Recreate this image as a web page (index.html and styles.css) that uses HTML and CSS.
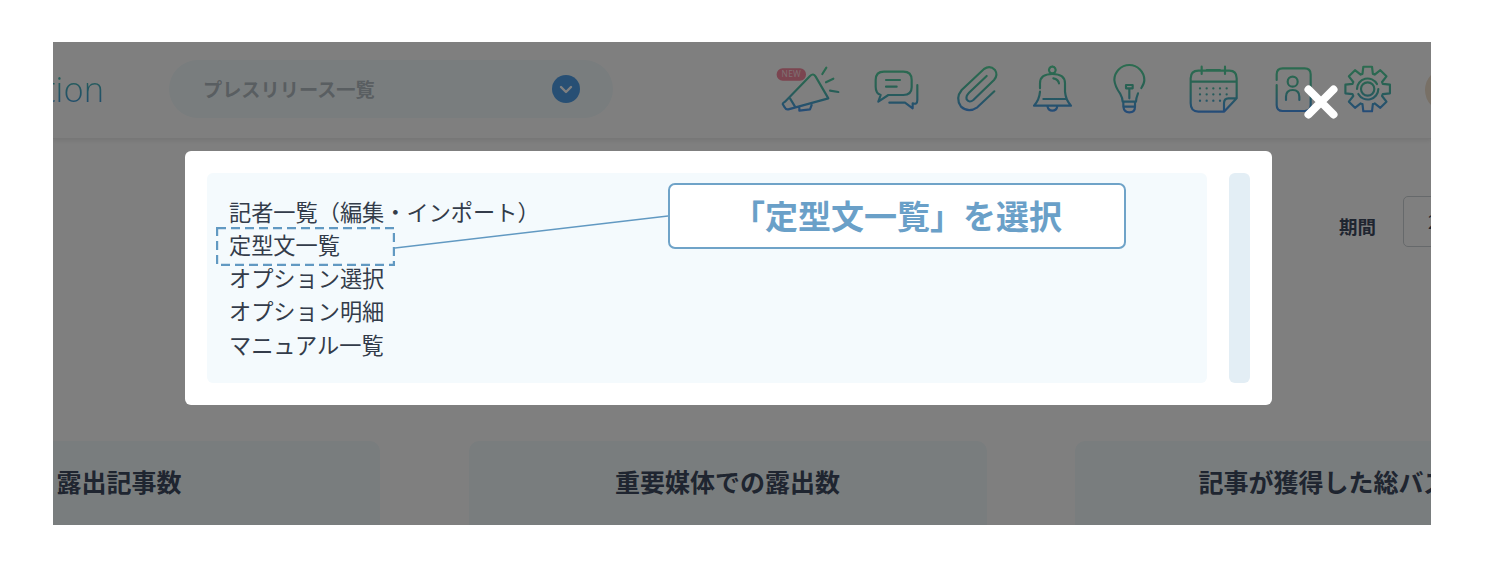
FILE: index.html
```html
<!DOCTYPE html>
<html lang="ja">
<head>
<meta charset="utf-8">
<title>定型文一覧</title>
<link rel="stylesheet" href="styles.css">
</head>
<body>
<svg class="defs" width="0" height="0" aria-hidden="true">
  <defs>
    <linearGradient id="ig" gradientUnits="userSpaceOnUse" x1="0" y1="50" x2="0" y2="185">
      <stop offset="0" stop-color="#58d8a0"/><stop offset=".5" stop-color="#50c0a8"/><stop offset="1" stop-color="#4a98f0"/>
    </linearGradient>
    <linearGradient id="gg" gradientUnits="userSpaceOnUse" x1="0" y1="-68" x2="0" y2="68">
      <stop offset="0" stop-color="#58d8a0"/><stop offset=".5" stop-color="#50c0a8"/><stop offset="1" stop-color="#4a98f0"/>
    </linearGradient>
  </defs>
</svg>
<main class="stage">
  <div class="page">
    <header class="header">
      <div class="logo"><span class="logo-text">tion</span></div>
      <div class="pill">
        <span class="pill-text">プレスリリース一覧</span>
        <svg class="chev" viewBox="0 0 28 28"><circle cx="14" cy="14" r="14" fill="#4f9fe8"/><path d="M9 12l5 5 5-5" fill="none" stroke="#fff" stroke-width="2.4" stroke-linecap="round" stroke-linejoin="round"/></svg>
      </div>
      <nav class="icons">
        <svg class="ic w90" viewBox="30 0 270 240">
          <path d="M75 155L150 78Q160 68 167 80L205 145L85 178Q78 180 74 172L68 162Q68 160 75 155M90 145L105 170M118 172V182L150 178L155 165M187 72L199 53M198 97L220 86M210 122L235 126"/>
          <rect class="badge" x="50" y="55" width="88" height="37" rx="18"/>
          <text class="badge-text" x="94" y="82">NEW</text>
        </svg>
        <svg class="ic w80" viewBox="300 0 240 240">
          <path d="M372 65H430Q455 65 455 90V112Q455 135 430 135H385L355 155L362 135Q347 130 347 110V90Q347 65 372 65M378 90H420M378 110H410M472 105V150Q472 165 458 160V175L435 158H388"/>
        </svg>
        <svg class="ic w80" viewBox="540 0 240 240">
          <path d="M703 124L652 172Q625 190 603 170Q585 145 605 120L672 57Q690 45 705 60Q715 75 702 90L640 150Q628 160 620 148Q617 138 627 128L680 78"/>
        </svg>
        <svg class="ic w75" viewBox="780 0 225 240">
          <path d="M877 50a10 10 0 1 1 -.1 0M840 115V100Q840 72 877 72Q915 72 915 100V125Q917 150 933 167H822Q838 150 840 125M850 147H918M862 168Q865 182 877 182Q890 182 892 168M880 85Q895 88 897 100"/>
        </svg>
        <svg class="ic w75" viewBox="-15 0 225 240">
          <path d="M124 114Q133 100 133 90A45 45 0 0 0 43 90Q45 110 60 130Q68 145 68 155H108Q108 145 114 130M70 155V170Q72 187 88 187Q105 187 105 170V155M72 170H104M88 145V115M78 105H98V115H78Z"/>
        </svg>
        <svg class="ic w90" viewBox="210 0 270 240">
          <path d="M372 185H295Q272 185 272 160V85Q272 62 295 62H388Q410 62 410 85V145L372 185V160Q372 145 385 145H410M272 95H410M305 50V72M375 50V72M320 60H360"/>
          <path class="dots" d="M300 115H385M300 133H385M300 152H365"/>
        </svg>
        <svg class="ic w70" viewBox="480 0 210 240">
          <path d="M530 90V73Q530 55 548 55H614Q632 55 632 73V165Q632 183 614 183H548Q530 183 530 165V105M563 95a15 15 0 1 0 30 0a15 15 0 1 0 -30 0M558 150V140Q558 120 578 120Q598 120 598 140V150"/>
        </svg>
        <svg class="ic w80" viewBox="690 0 240 240">
          <g transform="translate(803 117)">
            <path class="gear" d="M-15.6 -45.4L-13 -66.8H13L15.6 -45.4A48 48 0 0 1 21.1 -43.1L38 -56.4L56.4 -38L43.1 -21.1A48 48 0 0 1 45.4 -15.6L66.8 -13V13L45.4 15.6A48 48 0 0 1 43.1 21.1L56.4 38L38 56.4L21.1 43.1A48 48 0 0 1 15.6 45.4L13 66.8H-13L-15.6 45.4A48 48 0 0 1 -21.1 43.1L-38 56.4L-56.4 38L-43.1 21.1A48 48 0 0 1 -45.4 15.6L-66.8 13V-13L-45.4 -15.6A48 48 0 0 1 -43.1 -21.1L-56.4 -38L-38 -56.4L-21.1 -43.1A48 48 0 0 1 -15.6 -45.4Z"/>
            <circle class="gear" r="20"/>
            <path class="gear" d="M-32 0A32 32 0 0 1 28 -15M32 0A32 32 0 0 1 -28 15"/>
          </g>
        </svg>
        <div class="avatar"></div>
      </nav>
    </header>
    <section class="filter">
      <span class="filter-label">期間</span>
      <div class="filter-input">2023/01/01</div>
    </section>
    <section class="cards">
      <article class="card">露出記事数</article>
      <article class="card">重要媒体での露出数</article>
      <article class="card">記事が獲得した総バズ数</article>
    </section>
  </div>
  <div class="overlay"></div>
  <svg class="close" viewBox="0 0 36 36" aria-label="閉じる"><path d="M5.5 5.5L30.5 30.5M30.5 5.5L5.5 30.5"/></svg>
  <div class="modal">
    <div class="panel">
      <ul class="menu">
        <li>記者一覧（編集・インポート）</li>
        <li>定型文一覧</li>
        <li>オプション選択</li>
        <li>オプション明細</li>
        <li>マニュアル一覧</li>
      </ul>
    </div>
    <div class="scroll"></div>
    <svg class="dash" viewBox="0 0 179 39"><rect x="1" y="1" width="177" height="37"/></svg>
    <svg class="leader" viewBox="0 0 273 34"><path d="M0 33L273 1"/></svg>
    <div class="callout">「定型文一覧」を選択</div>
  </div>
</main>
</body>
</html>
```
FILE: styles.css
```css
* { box-sizing: border-box; }
html, body { margin: 0; padding: 0; background: #fff; }
body { font-family: "Noto Sans CJK JP", "Noto Sans", sans-serif; }
.defs { position: absolute; }
.stage {
  position: relative;
  width: 1378px;
  height: 483px;
  margin: 42px 53px 39px;
  overflow: hidden;
}
.page { width: 1378px; background: #fff; }
.header {
  display: flex;
  align-items: center;
  height: 97px;
  padding-bottom: 2px;
  border-bottom: 1px solid #eee;
  box-shadow: 0 2px 4px rgba(0,0,0,.08);
}
.logo {
  width: 51px;
  flex: none;
  display: flex;
  justify-content: flex-end;
  font-family: "Open Sans", sans-serif;
  font-weight: 300;
  font-size: 34.5px;
  line-height: 40px;
  white-space: nowrap;
}
.logo-text {
  background: linear-gradient(180deg, #50c8a8, #3f94e0);
  -webkit-background-clip: text;
  background-clip: text;
  color: transparent;
}
.pill {
  flex: none;
  display: flex;
  align-items: center;
  justify-content: space-between;
  width: 444px;
  height: 58px;
  margin-left: 65px;
  padding: 0 33px 0 34px;
  border-radius: 29px;
  background: #f2fafc;
}
.pill-text { font-size: 19.2px; font-weight: 700; color: #b2bcc2; white-space: nowrap; }
.chev { width: 28px; height: 28px; display: block; }
.icons { display: flex; align-items: center; margin-left: 157px; margin-top: 2px; flex: none; }
.ic { display: block; height: 80px; flex: none; }
.ic path, .ic circle {
  fill: none;
  stroke: url(#ig);
  stroke-width: 6.5;
  stroke-linecap: round;
  stroke-linejoin: round;
}
.ic .gear { stroke: url(#gg); }
.ic .dots { stroke-dasharray: 0 20; stroke-width: 7; }
.w90 { width: 90px; }
.w80 { width: 80px; }
.w75 { width: 75px; }
.w70 { width: 70px; }
.badge { fill: #f78aa0; }
.badge-text {
  font-family: "Open Sans", sans-serif;
  font-size: 25px;
  letter-spacing: 1px;
  text-anchor: middle;
  fill: #ffe0e6;
}
.avatar {
  width: 44px;
  height: 44px;
  margin-left: 15px;
  border-radius: 50%;
  background: #f0e0cc;
  flex: none;
}
.filter {
  display: flex;
  align-items: center;
  height: 51px;
  margin-top: 57px;
  padding-left: 1286px;
  width: 1700px;
}
.filter-label {
  flex: none;
  padding-top: 9px;
  font-size: 18.5px;
  font-weight: 700;
  color: #3e4a60;
}
.filter-input {
  flex: none;
  width: 220px;
  height: 51px;
  margin-left: 27px;
  padding-left: 24px;
  border: 1px solid #ccd2d6;
  border-radius: 5px;
  font-size: 18px;
  line-height: 49px;
  color: #3e4a60;
}
.cards {
  display: grid;
  grid-template-columns: 522px 518px 522px;
  column-gap: 88.5px;
  margin-top: 194px;
  margin-left: -195px;
  width: 1800px;
}
.card {
  height: 200px;
  padding-top: 22px;
  border-radius: 10px;
  background: #f2fafc;
  text-align: center;
  font-size: 25px;
  line-height: 36px;
  font-weight: 700;
  color: #3e4a60;
  white-space: nowrap;
}
.overlay { position: absolute; inset: 0; background: rgba(0,0,0,.5); }
.close {
  position: absolute;
  left: 1250px;
  top: 42px;
  width: 36px;
  height: 36px;
  fill: none;
  stroke: #fff;
  stroke-width: 8;
  stroke-linecap: round;
}
.modal {
  position: absolute;
  left: 132px;
  top: 109px;
  width: 1087px;
  height: 254px;
  display: flex;
  gap: 22px;
  padding: 22px;
  background: #fff;
  border-radius: 6px;
}
.panel { flex: 1; background: #f4fafd; border-radius: 6px; padding: 21.5px 22px; }
.scroll { flex: none; width: 21px; background: #e3eef5; border-radius: 6px; }
.menu {
  margin: 0;
  padding: 0;
  list-style: none;
  font-size: 22.2px;
  line-height: 33.3px;
  color: #333c4a;
}
.dash {
  position: absolute;
  left: 31px;
  top: 76px;
  width: 179px;
  height: 39px;
  fill: none;
  stroke: #6199c2;
  stroke-width: 2.4;
  stroke-dasharray: 9 5;
}
.leader {
  position: absolute;
  left: 210px;
  top: 64px;
  width: 273px;
  height: 34px;
  fill: none;
  stroke: #6199c2;
  stroke-width: 1.5;
}
.callout {
  position: absolute;
  left: 483px;
  top: 32px;
  width: 458px;
  height: 66px;
  border: 2px solid #6fa3c8;
  border-radius: 7px;
  background: #fff;
  text-align: center;
  font-size: 33px;
  line-height: 60px;
  font-weight: 700;
  color: #6aa0c8;
  white-space: nowrap;
}
```
